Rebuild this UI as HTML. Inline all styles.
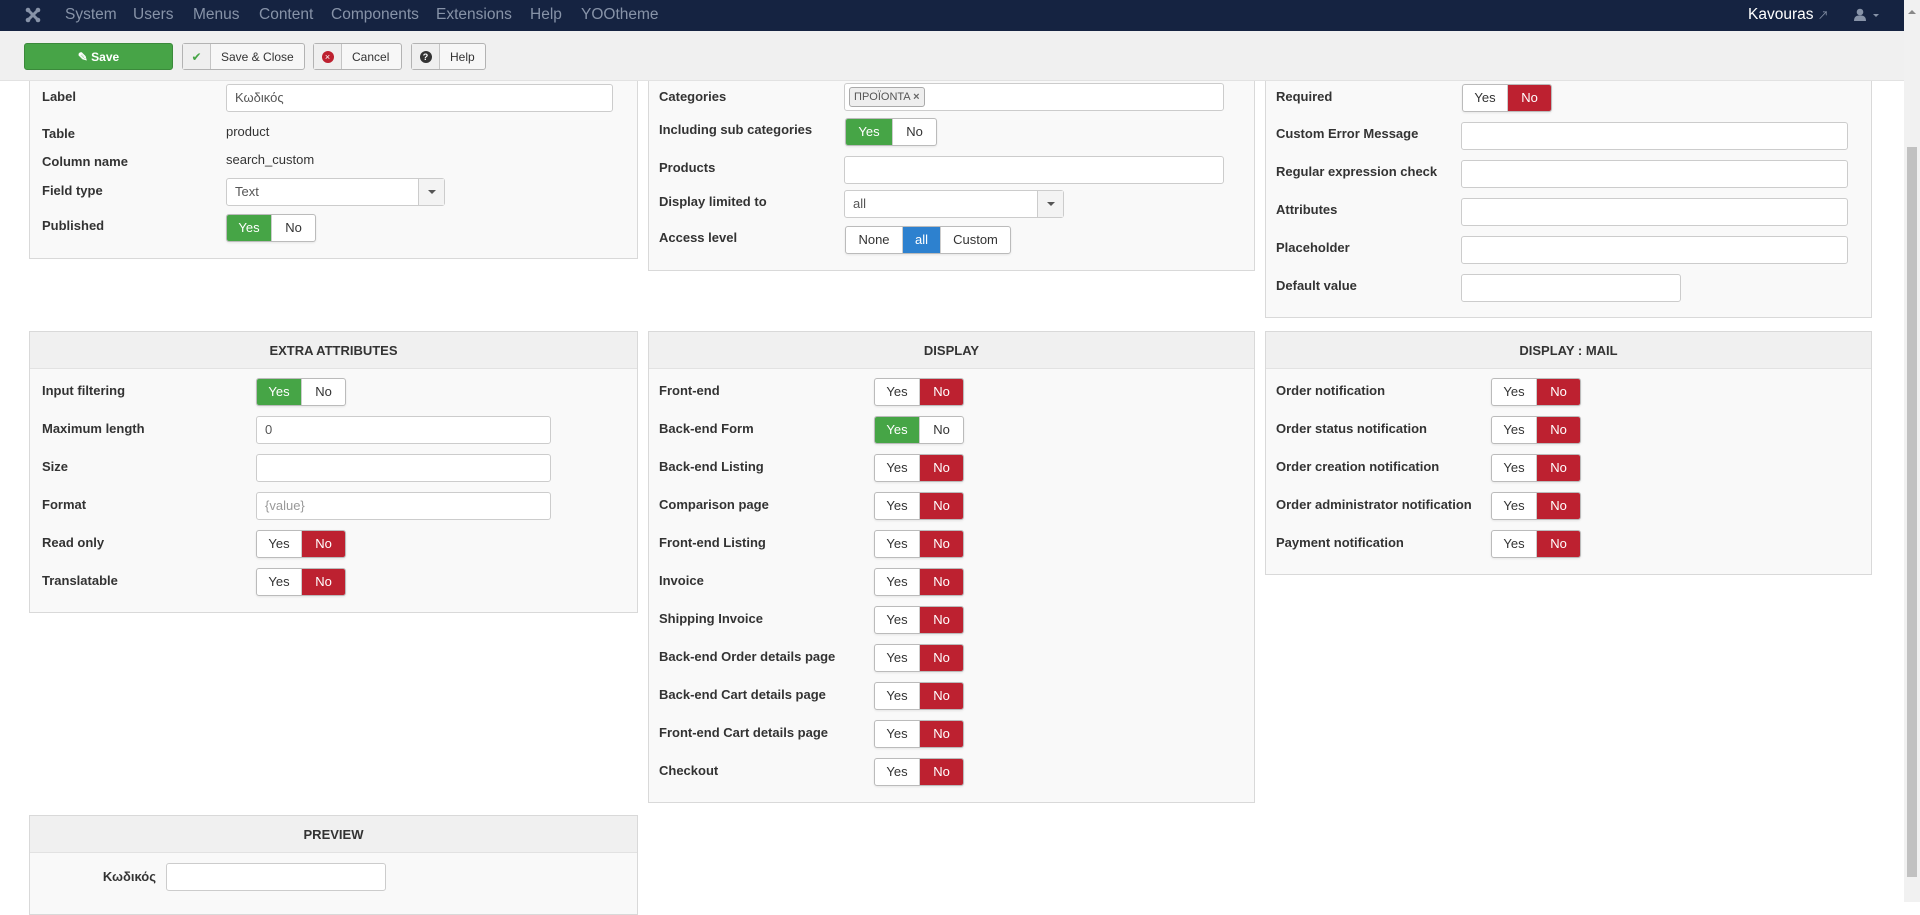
<!DOCTYPE html>
<html><head><meta charset="utf-8">
<style>
*{box-sizing:border-box;margin:0;padding:0}
body{width:1920px;height:902px;overflow:hidden;background:#fff;font-family:"Liberation Sans","Noto Sans CJK SC",sans-serif;font-size:13px;color:#333;position:relative}
.nav{position:absolute;left:0;top:0;width:1904px;height:31px;background:#152341}
.nav span{position:absolute;top:6px;font-size:15.5px;color:#8793a8}
.tb{position:absolute;left:0;top:31px;width:1904px;height:50px;background:#f0f0f0;border-bottom:1px solid #e2e2e2}
.btn{position:absolute;top:12px;height:27px;border:1px solid #b3b3b3;border-radius:3px;background:#f7f7f7;font-size:12px;color:#333;display:flex;align-items:center;white-space:nowrap}
.btn .ic{width:28px;flex:none;height:100%;border-right:1px solid #c5c5c5;display:flex;align-items:center;justify-content:center;background:#efefef}
.btn .tx{padding:0 10px}
.sb{position:absolute;left:1904px;top:0;width:16px;height:902px;background:#f1f1f1}
.sbt{position:absolute;left:1907px;top:147px;width:10px;height:730px;background:#c1c1c1}
.p{position:absolute;background:#f9f9f9;border:1px solid #d9d9d9}
.h{position:absolute;left:0;right:0;top:0;height:37px;background:#f0f0f0;border-bottom:1px solid #e2e2e2;text-align:center;font-weight:bold;font-size:13px;line-height:37px;color:#333}
.l{position:absolute;font-weight:bold;font-size:13px;line-height:16px;color:#333;white-space:nowrap}
.v{position:absolute;font-size:13px;line-height:16px;color:#333}
.in{position:absolute;height:28px;background:#fff;border:1px solid #ccc;border-radius:3px;font-size:13px;line-height:26px;padding-left:8px;color:#555}
.tg{position:absolute;height:28px;display:flex;border:1px solid #bbb;border-radius:3px;overflow:hidden;background:#fff;box-shadow:0 1px 2px rgba(0,0,0,.08)}
.tg div{width:44px;text-align:center;line-height:26px;font-size:13px;color:#333}
.tg .g{background:#46a546;color:#fff}
.tg .r{background:#bd2130;color:#fff}
.tg .b{background:#2d81cf;color:#fff}
.tg div+div{border-left:1px solid #ccc}
.sel .ar{position:absolute;right:0;top:0;width:26px;height:100%;border-left:1px solid #ccc;background:#f3f3f3}
.sel .ar:after{content:"";position:absolute;left:9px;top:11px;border:4px solid transparent;border-top:4px solid #555}
</style></head><body>
<div class="nav">
<svg style="position:absolute;left:25px;top:7px" width="16" height="16" viewBox="0 0 16 16"><g fill="#8793a8"><circle cx="3" cy="3" r="2.3"/><circle cx="13" cy="3" r="2.3"/><circle cx="3" cy="13" r="2.3"/><circle cx="13" cy="13" r="2.3"/><path d="M3 3L13 13M13 3L3 13" stroke="#8793a8" stroke-width="3"/></g></svg>
<span style="left:65px">System</span><span style="left:133px">Users</span><span style="left:193px">Menus</span><span style="left:259px">Content</span><span style="left:331px">Components</span><span style="left:436px">Extensions</span><span style="left:530px">Help</span><span style="left:581px">YOOtheme</span>
<span style="left:1748px;color:#fff">Kavouras <span style="position:static;font-size:11px">&#x2197;</span></span>
<svg style="position:absolute;left:1854px;top:8px" width="12" height="13" viewBox="0 0 12 13"><circle cx="6" cy="4" r="3.3" fill="#8793a8"/><path d="M0 13C0 8 3 7.5 6 7.5S12 8 12 13Z" fill="#8793a8"/></svg>
<div style="position:absolute;left:1873px;top:14px;border:3px solid transparent;border-top:3px solid #8793a8"></div>
</div>
<div class="tb">
<div class="btn" style="left:24px;width:149px;background:#47a447;border-color:#3b8a3b;color:#fff;justify-content:center;font-weight:bold">&#9998; Save</div>
<div class="btn" style="left:182px;width:123px"><div class="ic" style="color:#46a546">&#10004;</div><div class="tx">Save &amp; Close</div></div>
<div class="btn" style="left:313px;width:89px"><div class="ic"><span style="display:inline-block;width:12px;height:12px;border-radius:6px;background:#bd2130;color:#fff;font-size:9px;line-height:12px;text-align:center">&#215;</span></div><div class="tx">Cancel</div></div>
<div class="btn" style="left:411px;width:75px"><div class="ic"><span style="display:inline-block;width:12px;height:12px;border-radius:6px;background:#333;color:#fff;font-size:9px;line-height:12px;text-align:center;font-weight:bold">?</span></div><div class="tx">Help</div></div>
</div>

<div class="p" style="left:29px;top:60px;width:609px;height:199px;z-index:-1"></div>
<div class="l" style="left:42px;top:89px">Label</div><div class="in" style="left:226px;top:84px;width:387px">Κωδικός</div>
<div class="l" style="left:42px;top:126px">Table</div><div class="v" style="left:226px;top:124px">product</div>
<div class="l" style="left:42px;top:154px">Column name</div><div class="v" style="left:226px;top:152px">search_custom</div>
<div class="l" style="left:42px;top:183px">Field type</div><div class="in sel" style="left:226px;top:178px;width:219px">Text<div class="ar"></div></div>
<div class="l" style="left:42px;top:218px">Published</div><div class="tg" style="left:226px;top:214px"><div class="g">Yes</div><div>No</div></div>

<div class="p" style="left:648px;top:60px;width:607px;height:211px;z-index:-1"></div>
<div class="l" style="left:659px;top:89px">Categories</div><div class="in" style="left:844px;top:83px;width:380px;padding-left:4px"><span style="display:inline-block;border:1px solid #aaa;border-radius:3px;background:#eee;font-size:11px;line-height:18px;padding:0 4px;margin-top:3px;vertical-align:top">ΠΡΟΪΟΝΤΑ <b style="color:#666">&#215;</b></span></div>
<div class="l" style="left:659px;top:122px">Including sub categories</div><div class="tg" style="left:845px;top:118px"><div class="g" style="width:46px">Yes</div><div>No</div></div>
<div class="l" style="left:659px;top:160px">Products</div><div class="in" style="left:844px;top:156px;width:380px"></div>
<div class="l" style="left:659px;top:194px">Display limited to</div><div class="in sel" style="left:844px;top:190px;width:220px">all<div class="ar"></div></div>
<div class="l" style="left:659px;top:230px">Access level</div><div class="tg" style="left:845px;top:226px"><div style="width:56px">None</div><div class="b" style="width:38px">all</div><div style="width:70px">Custom</div></div>

<div class="p" style="left:1265px;top:60px;width:607px;height:258px;z-index:-1"></div>
<div class="l" style="left:1276px;top:89px">Required</div><div class="tg" style="left:1462px;top:84px"><div>Yes</div><div class="r">No</div></div>
<div class="l" style="left:1276px;top:126px">Custom Error Message</div><div class="in" style="left:1461px;top:122px;width:387px"></div>
<div class="l" style="left:1276px;top:164px">Regular expression check</div><div class="in" style="left:1461px;top:160px;width:387px"></div>
<div class="l" style="left:1276px;top:202px">Attributes</div><div class="in" style="left:1461px;top:198px;width:387px"></div>
<div class="l" style="left:1276px;top:240px">Placeholder</div><div class="in" style="left:1461px;top:236px;width:387px"></div>
<div class="l" style="left:1276px;top:278px">Default value</div><div class="in" style="left:1461px;top:274px;width:220px"></div>

<div class="p" style="left:29px;top:331px;width:609px;height:282px"><div class="h">EXTRA ATTRIBUTES</div></div>
<div class="l" style="left:42px;top:383px">Input filtering</div><div class="tg" style="left:256px;top:378px"><div class="g">Yes</div><div>No</div></div>
<div class="l" style="left:42px;top:421px">Maximum length</div><div class="in" style="left:256px;top:416px;width:295px">0</div>
<div class="l" style="left:42px;top:459px">Size</div><div class="in" style="left:256px;top:454px;width:295px"></div>
<div class="l" style="left:42px;top:497px">Format</div><div class="in" style="left:256px;top:492px;width:295px;color:#999">{value}</div>
<div class="l" style="left:42px;top:535px">Read only</div><div class="tg" style="left:256px;top:530px"><div>Yes</div><div class="r">No</div></div>
<div class="l" style="left:42px;top:573px">Translatable</div><div class="tg" style="left:256px;top:568px"><div>Yes</div><div class="r">No</div></div>

<div class="p" style="left:648px;top:331px;width:607px;height:472px"><div class="h">DISPLAY</div></div>
<div class="l" style="left:659px;top:383px">Front-end</div><div class="tg" style="left:874px;top:378px"><div>Yes</div><div class="r">No</div></div>
<div class="l" style="left:659px;top:421px">Back-end Form</div><div class="tg" style="left:874px;top:416px"><div class="g">Yes</div><div>No</div></div>
<div class="l" style="left:659px;top:459px">Back-end Listing</div><div class="tg" style="left:874px;top:454px"><div>Yes</div><div class="r">No</div></div>
<div class="l" style="left:659px;top:497px">Comparison page</div><div class="tg" style="left:874px;top:492px"><div>Yes</div><div class="r">No</div></div>
<div class="l" style="left:659px;top:535px">Front-end Listing</div><div class="tg" style="left:874px;top:530px"><div>Yes</div><div class="r">No</div></div>
<div class="l" style="left:659px;top:573px">Invoice</div><div class="tg" style="left:874px;top:568px"><div>Yes</div><div class="r">No</div></div>
<div class="l" style="left:659px;top:611px">Shipping Invoice</div><div class="tg" style="left:874px;top:606px"><div>Yes</div><div class="r">No</div></div>
<div class="l" style="left:659px;top:649px">Back-end Order details page</div><div class="tg" style="left:874px;top:644px"><div>Yes</div><div class="r">No</div></div>
<div class="l" style="left:659px;top:687px">Back-end Cart details page</div><div class="tg" style="left:874px;top:682px"><div>Yes</div><div class="r">No</div></div>
<div class="l" style="left:659px;top:725px">Front-end Cart details page</div><div class="tg" style="left:874px;top:720px"><div>Yes</div><div class="r">No</div></div>
<div class="l" style="left:659px;top:763px">Checkout</div><div class="tg" style="left:874px;top:758px"><div>Yes</div><div class="r">No</div></div>

<div class="p" style="left:1265px;top:331px;width:607px;height:244px"><div class="h">DISPLAY : MAIL</div></div>
<div class="l" style="left:1276px;top:383px">Order notification</div><div class="tg" style="left:1491px;top:378px"><div>Yes</div><div class="r">No</div></div>
<div class="l" style="left:1276px;top:421px">Order status notification</div><div class="tg" style="left:1491px;top:416px"><div>Yes</div><div class="r">No</div></div>
<div class="l" style="left:1276px;top:459px">Order creation notification</div><div class="tg" style="left:1491px;top:454px"><div>Yes</div><div class="r">No</div></div>
<div class="l" style="left:1276px;top:497px">Order administrator notification</div><div class="tg" style="left:1491px;top:492px"><div>Yes</div><div class="r">No</div></div>
<div class="l" style="left:1276px;top:535px">Payment notification</div><div class="tg" style="left:1491px;top:530px"><div>Yes</div><div class="r">No</div></div>

<div class="p" style="left:29px;top:815px;width:609px;height:100px"><div class="h">PREVIEW</div></div>
<div class="l" style="left:100px;top:869px;width:56px;text-align:right">Κωδικός</div><div class="in" style="left:166px;top:863px;width:220px"></div>

<div class="sb"></div><div class="sbt"></div>
<div style="position:absolute;left:1908px;top:6px;border:4px solid transparent;border-bottom:4px solid #888"></div>
</body></html>
